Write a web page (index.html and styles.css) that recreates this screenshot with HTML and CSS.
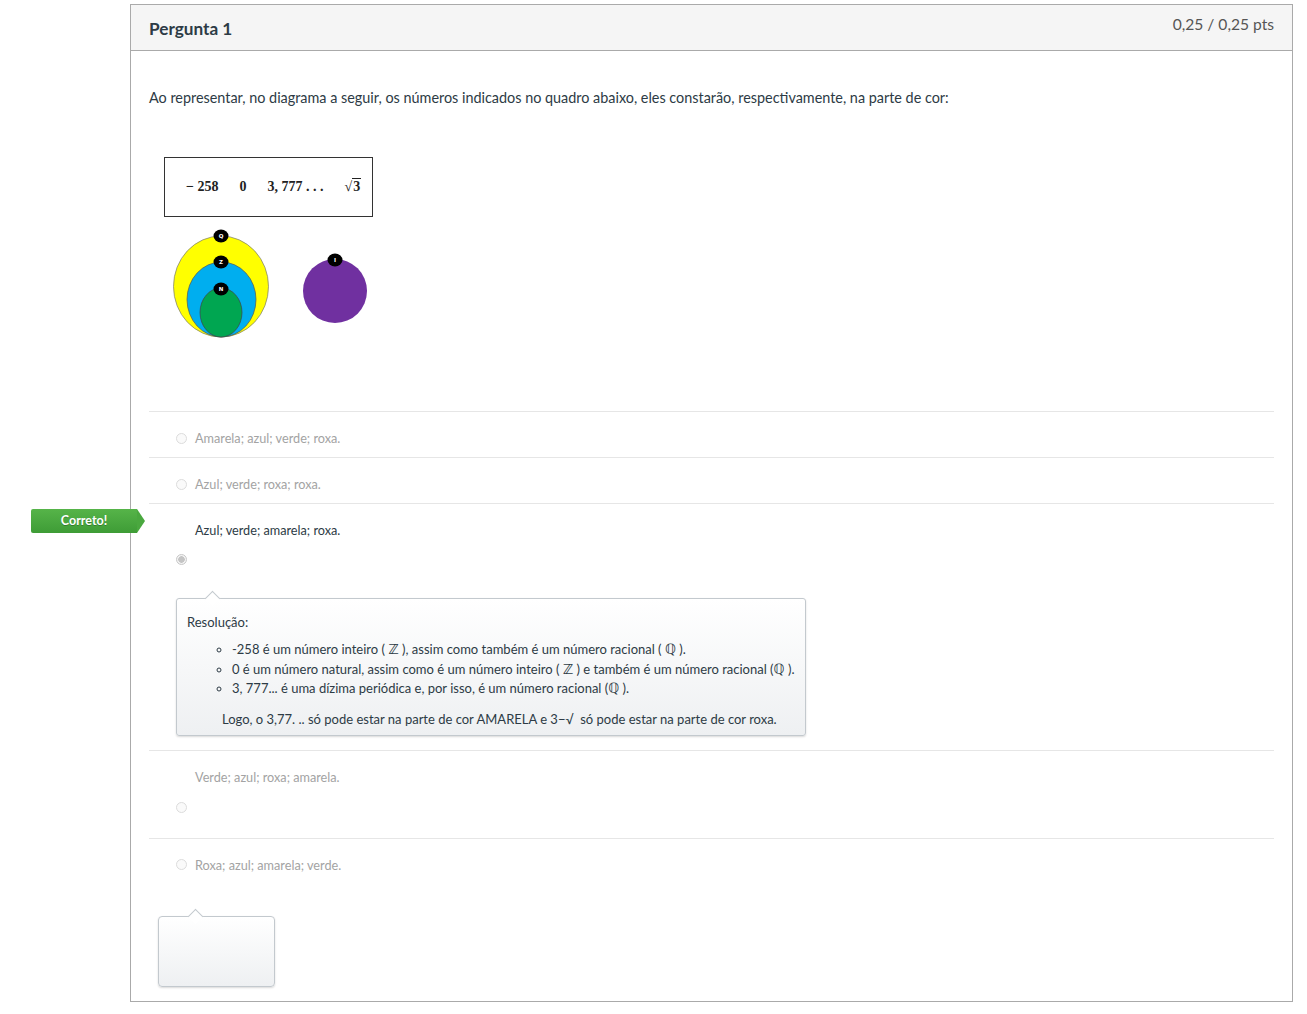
FILE: index.html
```html
<!DOCTYPE html>
<html lang="pt">
<head>
<meta charset="utf-8">
<title>Pergunta 1</title>
<link rel="stylesheet" href="styles.css">
</head>
<body>
<div class="question">
  <div class="q-header">
    <div class="q-title">Pergunta 1</div>
    <div class="q-points">0,25 / 0,25 pts</div>
  </div>
  <div class="q-body">
    <p class="q-text">Ao representar, no diagrama a seguir, os números indicados no quadro abaixo, eles constarão, respectivamente, na parte de cor:</p>
    <div class="math-box">
      <span>− 258</span>
      <span>0</span>
      <span>3, 777 . . .</span>
      <span class="sqrt">√<span class="rad">3</span></span>
    </div>
    <svg class="diagram" width="210" height="115" viewBox="0 0 210 115">
      <ellipse cx="57" cy="60.5" rx="47.5" ry="50.5" fill="#ffff00" stroke="#777" stroke-width="0.7"/>
      <ellipse cx="57.5" cy="73.5" rx="34.5" ry="37.5" fill="#00aeef" stroke="#555" stroke-width="0.7"/>
      <ellipse cx="57" cy="86.5" rx="21" ry="24.5" fill="#00a651" stroke="#444" stroke-width="0.7"/>
      <circle cx="171" cy="65" r="32" fill="#7030a0"/>
      <g fill="#000">
        <ellipse cx="57" cy="10" rx="7.5" ry="6.5"/>
        <ellipse cx="57" cy="36" rx="7.5" ry="6.5"/>
        <ellipse cx="57" cy="63" rx="7.5" ry="6.5"/>
        <ellipse cx="171" cy="34" rx="7.5" ry="6.5"/>
      </g>
      <g fill="#fff" font-family="DejaVu Sans, sans-serif" font-size="5.5" font-weight="bold" text-anchor="middle">
        <text x="57" y="12">Q</text>
        <text x="57" y="38">Z</text>
        <text x="57" y="65">N</text>
        <text x="171" y="36">I</text>
      </g>
    </svg>

    <div class="answers">
      <div class="answer">
        <span class="radio"></span><span class="a-text">Amarela; azul; verde; roxa.</span>
      </div>
      <div class="answer">
        <span class="radio"></span><span class="a-text">Azul; verde; roxa; roxa.</span>
      </div>
      <div class="answer correct">
        <div class="flag">Correto!</div>
        <div class="a-text block">Azul; verde; amarela; roxa.</div>
        <div class="radio-line"><span class="radio checked"></span></div>
        <div class="comment">
          <div>Resolução:</div>
          <ul>
            <li>-258 é um número inteiro ( <span class="ds">ℤ</span> ), assim como também é um número racional ( <span class="ds">ℚ</span> ).</li>
            <li>0 é um número natural, assim como é um número inteiro ( <span class="ds">ℤ</span> ) e também é um número racional (<span class="ds">ℚ</span> ).</li>
            <li>3, 777... é uma dízima periódica e, por isso, é um número racional (<span class="ds">ℚ</span> ).</li>
          </ul>
          <div class="logo">Logo, o 3,77. .. só pode estar na parte de cor AMARELA e 3−√&nbsp; só pode estar na parte de cor roxa.</div>
        </div>
      </div>
      <div class="answer stacked">
        <div class="a-text block">Verde; azul; roxa; amarela.</div>
        <div class="radio-line"><span class="radio"></span></div>
      </div>
      <div class="answer last">
        <span class="radio"></span><span class="a-text">Roxa; azul; amarela; verde.</span>
        <div class="empty-comment"></div>
      </div>
    </div>
  </div>
</div>
</body>
</html>
```
FILE: styles.css
```css
html, body {
  margin: 0;
  padding: 0;
  background: #fff;
}
body {
  font-family: Lato, "Open Sans", sans-serif;
  color: #2d3b45;
}
.question {
  margin: 4px 0 0 130px;
  width: 1163px;
  height: 998px;
  box-sizing: border-box;
  border: 1px solid #aaaaaa;
}
.q-header {
  height: 45px;
  background: #f5f5f5;
  border-bottom: 1px solid #aaaaaa;
  display: flex;
  justify-content: space-between;
  align-items: flex-start;
  padding: 0 18px 0 18px;
}
.q-title {
  margin-top: 14px;
  font-size: 17.2px;
  line-height: 20px;
  font-weight: bold;
  color: #2d3b45;
}
.q-points {
  margin-top: 10px;
  font-size: 15.6px;
  line-height: 18px;
  color: #555;
}
.q-body {
  padding: 0 18px 0 18px;
}
.q-text {
  margin: 37px 0 0 0;
  font-size: 14.4px;
  line-height: 20px;
  color: #2d3b45;
}
.math-box {
  margin: 49px 0 0 15px;
  width: 209px;
  height: 60px;
  box-sizing: border-box;
  border: 1px solid #333;
  display: flex;
  align-items: center;
  gap: 21px;
  padding-left: 21px;
  font-family: "Liberation Serif", "DejaVu Serif", serif;
  font-weight: bold;
  font-size: 14px;
  color: #222;
}
.sqrt .rad {
  border-top: 1px solid #222;
  padding: 0 1px;
}
.diagram {
  display: block;
  margin: 9px 0 0 15px;
}
.answers {
  margin-top: 70px;
}
.answer {
  position: relative;
  border-top: 1px solid #e6e6e6;
  padding: 17px 0 10px 0;
  font-size: 12.7px;
  line-height: 18px;
  display: flex;
  align-items: center;
}
.answer.correct, .answer.stacked, .answer.last {
  display: block;
}
.radio {
  display: inline-block;
  box-sizing: border-box;
  width: 11px;
  height: 11px;
  border: 1px solid #dcdcdc;
  border-radius: 50%;
  background: #fafafa;
  margin: 0 8px 0 27px;
  vertical-align: middle;
}
.radio.checked {
  border: 1px solid #c8c8c8;
  background: radial-gradient(circle, #c4c4c4 0 3px, #f3f3f3 3.5px);
}
.a-text {
  color: #a3a3a3;
}
.a-text.block {
  padding-left: 46px;
}
.correct .a-text {
  color: #2d3b45;
}
.radio-line {
  height: 18px;
  display: flex;
  align-items: center;
}
.correct .radio-line {
  margin-top: 11px;
}
.correct {
  padding-bottom: 14px;
}
.stacked .radio-line {
  margin-top: 12px;
}
.stacked {
  padding-bottom: 22px;
}
.answer.last {
  padding-top: 15px;
}
.last .a-text {
  vertical-align: middle;
}
.flag {
  position: absolute;
  left: -118px;
  top: 5px;
  width: 106px;
  height: 24px;
  line-height: 24px;
  text-align: center;
  font-size: 12.5px;
  font-weight: bold;
  color: #fff;
  text-shadow: 0 1px 0 rgba(0,0,0,0.25);
  background: linear-gradient(#56b449, #3e9c36);
  border-radius: 2px 0 0 2px;
  z-index: 2;
}
.flag::after {
  content: "";
  position: absolute;
  right: -8px;
  top: 0;
  border-top: 12px solid transparent;
  border-bottom: 12px solid transparent;
  border-left: 8px solid #4aa83f;
}
.comment {
  position: relative;
  margin: 30px 0 0 27px;
  width: 630px;
  height: 138px;
  box-sizing: border-box;
  border: 1px solid #c3c9ce;
  border-radius: 3px;
  background: linear-gradient(#ffffff, #eef0f2);
  box-shadow: 0 1px 2px rgba(0,0,0,0.15);
  padding: 14px 10px 6px 10px;
  font-size: 13px;
  line-height: 18px;
  color: #2d3b45;
}
.comment::before, .empty-comment::before {
  content: "";
  position: absolute;
  top: -6px;
  left: 30px;
  width: 10px;
  height: 10px;
  background: #fff;
  border-top: 1px solid #c3c9ce;
  border-left: 1px solid #c3c9ce;
  transform: rotate(45deg);
}
.comment ul {
  margin: 9px 0 0 0;
  padding-left: 45px;
  list-style-type: circle;
  line-height: 19.5px;
}
.comment .ds {
  font-family: "DejaVu Sans", sans-serif;
  font-size: 14px;
  color: #2d3b45;
}
.comment .logo {
  margin-top: 11px;
  padding-left: 35px;
}
.empty-comment {
  position: relative;
  margin: 42px 0 0 9px;
  width: 117px;
  height: 71px;
  box-sizing: border-box;
  border: 1px solid #c3c9ce;
  border-radius: 4px;
  background: linear-gradient(#ffffff, #eef0f2);
  box-shadow: 0 1px 2px rgba(0,0,0,0.15);
}
.empty-comment::before {
  left: 31px;
}
```
